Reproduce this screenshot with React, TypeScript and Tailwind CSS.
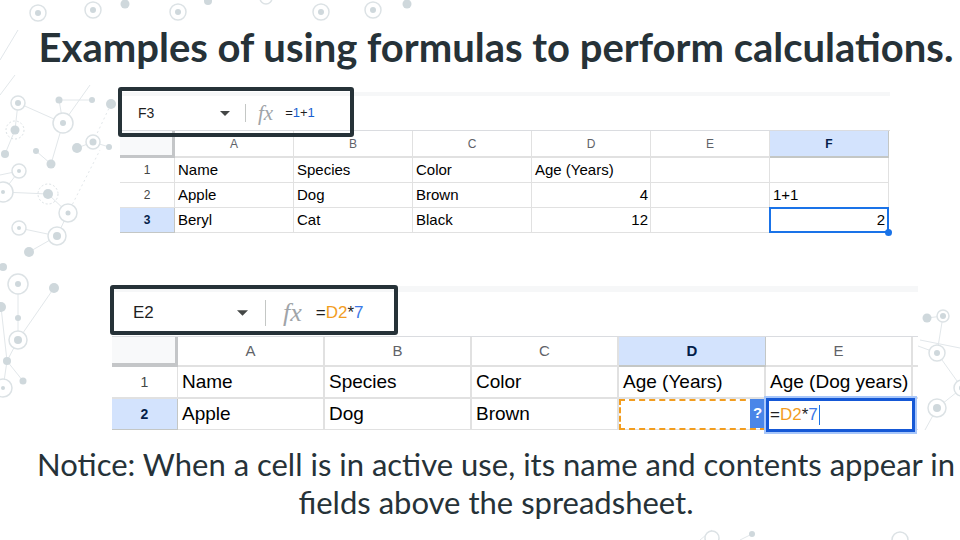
import React from "react";

type Node = { x: number; y: number; r: number; t: "dot" | "ring" | "dash"; inner?: number };

const nodes: Node[] = [
  // top row
  { x: 38, y: 13, r: 8, t: "ring", inner: 3 },
  { x: 93, y: 10, r: 8, t: "ring", inner: 3 },
  { x: 125, y: 4, r: 4.5, t: "dot" },
  { x: 178, y: 12, r: 8, t: "ring", inner: 3 },
  { x: 208, y: 1, r: 4, t: "dot" },
  { x: 266, y: -2, r: 6, t: "ring" },
  { x: 321, y: 12, r: 8, t: "ring", inner: 3 },
  { x: 373, y: 10, r: 8, t: "ring", inner: 3 },
  { x: 407, y: 4, r: 4.5, t: "dot" },
  // left cluster
  { x: 18, y: 103, r: 7, t: "ring", inner: 3 },
  { x: 59, y: 100, r: 3.5, t: "dot" },
  { x: 92, y: 100, r: 3, t: "dot" },
  { x: 63, y: 123, r: 10, t: "ring", inner: 3 },
  { x: 111, y: 104, r: 5, t: "dot" },
  { x: 15, y: 130, r: 4.5, t: "dot" },
  { x: 15, y: 130, r: 9, t: "dash" },
  { x: 5, y: 154, r: 4, t: "dot" },
  { x: 36, y: 151, r: 3, t: "dot" },
  { x: 51, y: 164, r: 4.5, t: "dot" },
  { x: 77, y: 148, r: 5, t: "dot" },
  { x: 93, y: 142, r: 7, t: "ring", inner: 3.5 },
  { x: 109, y: 147, r: 3, t: "dot" },
  { x: 19, y: 171, r: 7, t: "ring", inner: 2 },
  { x: 3, y: 192, r: 10, t: "ring", inner: 2 },
  { x: 48, y: 194, r: 5, t: "dot" },
  { x: 48, y: 194, r: 10, t: "dash" },
  { x: 68, y: 213, r: 9, t: "ring", inner: 2.5 },
  { x: 19, y: 228, r: 7, t: "ring", inner: 2 },
  { x: 57, y: 236, r: 9, t: "ring", inner: 4 },
  { x: 29, y: 252, r: 5, t: "dot" },
  { x: 3, y: 267, r: 4, t: "dot" },
  { x: 18, y: 284, r: 10, t: "ring", inner: 3 },
  { x: 54, y: 288, r: 5, t: "dot" },
  { x: 1, y: 307, r: 5, t: "dot" },
  { x: 18, y: 318, r: 3, t: "dot" },
  { x: 18, y: 340, r: 9, t: "ring", inner: 4 },
  { x: 7, y: 361, r: 4, t: "dot" },
  { x: 23, y: 381, r: 3.5, t: "dot" },
  { x: 3, y: 388, r: 9, t: "ring", inner: 2 },
  // right cluster
  { x: 927, y: 318, r: 4.5, t: "dot" },
  { x: 943, y: 316, r: 6, t: "ring", inner: 3 },
  { x: 937, y: 353, r: 8, t: "ring", inner: 3 },
  { x: 962, y: 388, r: 8, t: "ring", inner: 3 },
  { x: 937, y: 408, r: 9, t: "ring", inner: 4 },
  // bottom right faint
  { x: 712, y: 538, r: 7, t: "ring" },
  { x: 752, y: 534, r: 3, t: "dot" },
  { x: 900, y: 540, r: 8, t: "ring" },
];

const lines: [number, number, number, number, boolean?][] = [
  [59, 100, 92, 100],
  [59, 100, 63, 123],
  [18, 103, 63, 123],
  [63, 123, 51, 164],
  [63, 123, 90, 85],
  [36, 151, 51, 164],
  [15, 130, 18, 103],
  [15, 130, 5, 154],
  [93, 142, 77, 148],
  [93, 142, 109, 147],
  [93, 142, 111, 104, true],
  [19, 171, 3, 192],
  [3, 192, 48, 194],
  [48, 194, 68, 213],
  [68, 213, 57, 236],
  [19, 228, 57, 236],
  [68, 213, 100, 150, true],
  [29, 252, 57, 236],
  [18, 284, 18, 340],
  [54, 288, 18, 340],
  [18, 340, 7, 361],
  [7, 361, 23, 381],
  [7, 361, 3, 388],
  [1, 307, 7, 361],
  [19, 171, 0, 175],
  [0, 60, 18, 30],
  [0, 95, 15, 75],
  [927, 318, 943, 316],
  [943, 316, 937, 353],
  [937, 353, 962, 388],
  [937, 353, 918, 346],
  [937, 408, 962, 388],
  [920, 340, 960, 348],
  [925, 430, 937, 408],
  [700, 540, 712, 530],
  [740, 540, 752, 534],
];

function Decor() {
  return (
    <svg className="absolute inset-0 pointer-events-none" width={960} height={540} viewBox="0 0 960 540">
      {lines.map(([x1, y1, x2, y2, d], i) => (
        <line key={i} x1={x1} y1={y1} x2={x2} y2={y2} stroke="#e2e7ea" strokeWidth={1} strokeDasharray={d ? "2 3" : undefined} />
      ))}
      {nodes.map((n, i) =>
        n.t === "dot" ? (
          <circle key={i} cx={n.x} cy={n.y} r={n.r} fill="#cfd8dc" />
        ) : n.t === "dash" ? (
          <circle key={i} cx={n.x} cy={n.y} r={n.r} fill="none" stroke="#dce2e5" strokeWidth={1} strokeDasharray="2 2" />
        ) : (
          <g key={i}>
            <circle cx={n.x} cy={n.y} r={n.r} fill="white" stroke="#dce2e5" strokeWidth={1.5} />
            {n.inner ? <circle cx={n.x} cy={n.y} r={n.inner} fill="#cfd8dc" /> : null}
          </g>
        )
      )}
    </svg>
  );
}

function Caret({ big }: { big?: boolean }) {
  return (
    <svg width={big ? 11 : 10} height={big ? 6 : 5} viewBox="0 0 10 5">
      <path d="M0 0 L10 0 L5 5 Z" fill="#444746" />
    </svg>
  );
}

const sheetFont = { fontFamily: '"Liberation Sans", Arial, sans-serif' };

function Sheet1() {
  const cols = ["A", "B", "C", "D", "E", "F"];
  const rows: { n: string; cells: { v: string; right?: boolean }[]; sel?: boolean }[] = [
    { n: "1", cells: [{ v: "Name" }, { v: "Species" }, { v: "Color" }, { v: "Age (Years)" }, { v: "" }, { v: "" }] },
    { n: "2", cells: [{ v: "Apple" }, { v: "Dog" }, { v: "Brown" }, { v: "4", right: true }, { v: "" }, { v: "1+1" }] },
    { n: "3", sel: true, cells: [{ v: "Beryl" }, { v: "Cat" }, { v: "Black" }, { v: "12", right: true }, { v: "" }, { v: "" }] },
  ];
  return (
    <div className="relative ml-[120px] mt-[22px] w-[770px]" style={sheetFont}>
      {/* toolbar */}
      <div className="h-[38px] border-t-[4px] border-[#f6f7f8] flex items-center text-[#1f1f1f]">
        <div className="w-[100px] pl-[18px] text-[14px]">F3</div>
        <Caret />
        <div className="ml-[15px] w-px h-[18px] bg-[#c4c7c5]" />
        <div className="ml-[12px] text-[21px] italic text-[#a0a4a8] leading-none" style={{ fontFamily: '"Liberation Serif", serif' }}>
          fx
        </div>
        <div className="ml-[12px] text-[13px]">
          =<span className="text-[#1a5fd0]">1</span>+<span className="text-[#1a5fd0]">1</span>
        </div>
      </div>
      {/* grid */}
      <div className="grid grid-cols-[55px_repeat(6,119px)] grid-rows-[27px_25px_25px_25px] border-t border-[#dadce0]">
        <div className="bg-[#f8f9fa] border-r-[3px] border-b-[3px] border-[#c4c6c8]" />
        {cols.map((c) => (
          <div
            key={c}
            className={
              c === "F"
                ? "bg-[#d3e3fd] text-[#041e49] font-bold text-[12px] flex items-center justify-center border-r border-b-2 border-[#c4c7c5]"
                : "text-[#5f6368] text-[12px] flex items-center justify-center border-r border-b-2 border-[#e1e1e1]"
            }
          >
            {c}
          </div>
        ))}
        {rows.map((r) => (
          <React.Fragment key={r.n}>
            <div
              className={
                r.sel
                  ? "bg-[#d3e3fd] text-[#041e49] font-bold text-[12px] flex items-center justify-center border-r border-b border-[#c4c7c5]"
                  : "text-[#444746] text-[12px] flex items-center justify-center border-r border-b border-[#e1e1e1]"
              }
            >
              {r.n}
            </div>
            {r.cells.map((c, i) => (
              <div
                key={i}
                className={
                  "relative text-[15px] text-black flex items-center border-r border-b border-[#e1e1e1] " +
                  (c.right ? "justify-end pr-[2px]" : "pl-[3px]")
                }
              >
                {c.v}
                {r.sel && i === 5 ? (
                  <>
                    <div className="absolute -left-px -top-px -right-px -bottom-px border-2 border-[#1a73e8] flex items-center justify-end pr-[2px]">
                      2
                    </div>
                    <div className="absolute -right-[4px] -bottom-[4px] w-[7px] h-[7px] rounded-full bg-[#1a73e8]" />
                  </>
                ) : null}
              </div>
            ))}
          </React.Fragment>
        ))}
      </div>
      {/* annotation box */}
      <div className="absolute left-[-2px] top-[-5px] w-[236px] h-[50px] border-[4px] border-[#263238] rounded-[3px]" />
    </div>
  );
}

function Sheet2() {
  const cols = ["A", "B", "C", "D", "E"];
  return (
    <div className="relative ml-[112px] mt-[53px] w-[806px]" style={sheetFont}>
      <div className="h-[50px] border-t-[6px] border-[#f6f7f8] flex items-center text-[#1f1f1f] pb-[2px]">
        <div className="w-[125px] pl-[21px] text-[17px]">E2</div>
        <Caret big />
        <div className="ml-[17px] w-px h-[26px] bg-[#c4c7c5]" />
        <div className="ml-[17px] text-[26px] italic text-[#a0a4a8] leading-none" style={{ fontFamily: '"Liberation Serif", serif' }}>
          fx
        </div>
        <div className="ml-[14px] text-[17px]">
          =<span className="text-[#f29d1f]">D2</span>*<span className="text-[#3b78e7]">7</span>
        </div>
      </div>
      <div className="grid grid-cols-[66px_repeat(5,147px)_5px] grid-rows-[30px_32px_31px] border-t border-[#dadce0]">
        <div className="bg-[#f8f9fa] border-r-[3px] border-b-[4px] border-[#c4c6c8]" />
        {cols.map((c) => (
          <div
            key={c}
            className={
              c === "D"
                ? "bg-[#d3e3fd] text-[#041e49] font-bold text-[15px] flex items-center justify-center border-r border-b-2 border-[#c4c7c5]"
                : "text-[#5f6368] text-[15px] flex items-center justify-center border-r-2 border-b-2 border-[#e1e1e1]"
            }
          >
            {c}
          </div>
        ))}
        <div className="border-b-2 border-[#e1e1e1]" />
        {/* row 1 */}
        <div className="text-[#444746] text-[14px] flex items-center justify-center border-r border-b-2 border-[#e1e1e1]">1</div>
        {["Name", "Species", "Color", "Age (Years)", "Age (Dog years)"].map((v) => (
          <div key={v} className="text-[19px] text-black flex items-center pl-[4px] border-r-2 border-b-2 border-[#e1e1e1] whitespace-nowrap">
            {v}
          </div>
        ))}
        <div className="border-b-2 border-[#e1e1e1]" />
        {/* row 2 */}
        <div className="bg-[#d3e3fd] text-[#041e49] font-bold text-[14px] flex items-center justify-center border-r border-b border-[#c4c7c5]">
          2
        </div>
        {["Apple", "Dog", "Brown"].map((v) => (
          <div key={v} className="text-[19px] text-black flex items-center pl-[4px] border-r-2 border-b border-[#e1e1e1]">
            {v}
          </div>
        ))}
        <div className="relative border-r-2 border-b border-[#e1e1e1]">
          <div className="absolute left-0 top-0 right-[-2px] bottom-[-1px] border-2 border-dashed border-[#f29d1f]" />
        </div>
        <div className="relative border-r-2 border-b border-[#e1e1e1]">
          <div className="absolute left-[-16px] top-0 w-[15px] h-[29px] bg-[#4a86e8] text-white font-bold text-[15px] flex items-center justify-center">
            ?
          </div>
          <div className="absolute left-[-2px] top-[-3px] w-[153px] h-[38px] border-2 border-[#a8c7fa]">
            <div className="w-full h-full border-[3px] border-[#1558d6] bg-white flex items-center pl-[1px] text-[17px] text-[#1f1f1f]">
              =<span className="text-[#f29d1f]">D2</span>*<span className="text-[#3b78e7]">7</span>
              <span className="inline-block w-px h-[20px] bg-[#1a73e8] ml-[1px]" />
            </div>
          </div>
        </div>
        <div className="border-b border-[#e1e1e1]" />
      </div>
      <div className="absolute left-[-2px] top-[-1px] w-[288px] h-[50px] border-[4px] border-[#263238] rounded-[3px]" />
    </div>
  );
}

export default function App() {
  return (
    <div className="relative w-[960px] h-[540px] overflow-hidden bg-white">
      <Decor />
      <div className="relative flex flex-col">
        <h1
          className="mt-[24px] h-[46px] leading-[46px] text-[40px] font-bold text-[#263238] pl-[32px] text-center whitespace-nowrap"
          style={{ fontFamily: "Lato, 'Open Sans', sans-serif" }}
        >
          Examples of using formulas to perform calculations.
        </h1>
        <Sheet1 />
        <Sheet2 />
        <p
          className="mt-[15px] pl-[32px] text-center text-[31px] leading-[38px] text-[#263238]"
          style={{ fontFamily: "Lato, 'Open Sans', sans-serif" }}
        >
          <span className="whitespace-nowrap">Notice: When a cell is in active use, its name and contents appear in</span>
          <br />
          <span className="whitespace-nowrap">fields above the spreadsheet.</span>
        </p>
      </div>
    </div>
  );
}
